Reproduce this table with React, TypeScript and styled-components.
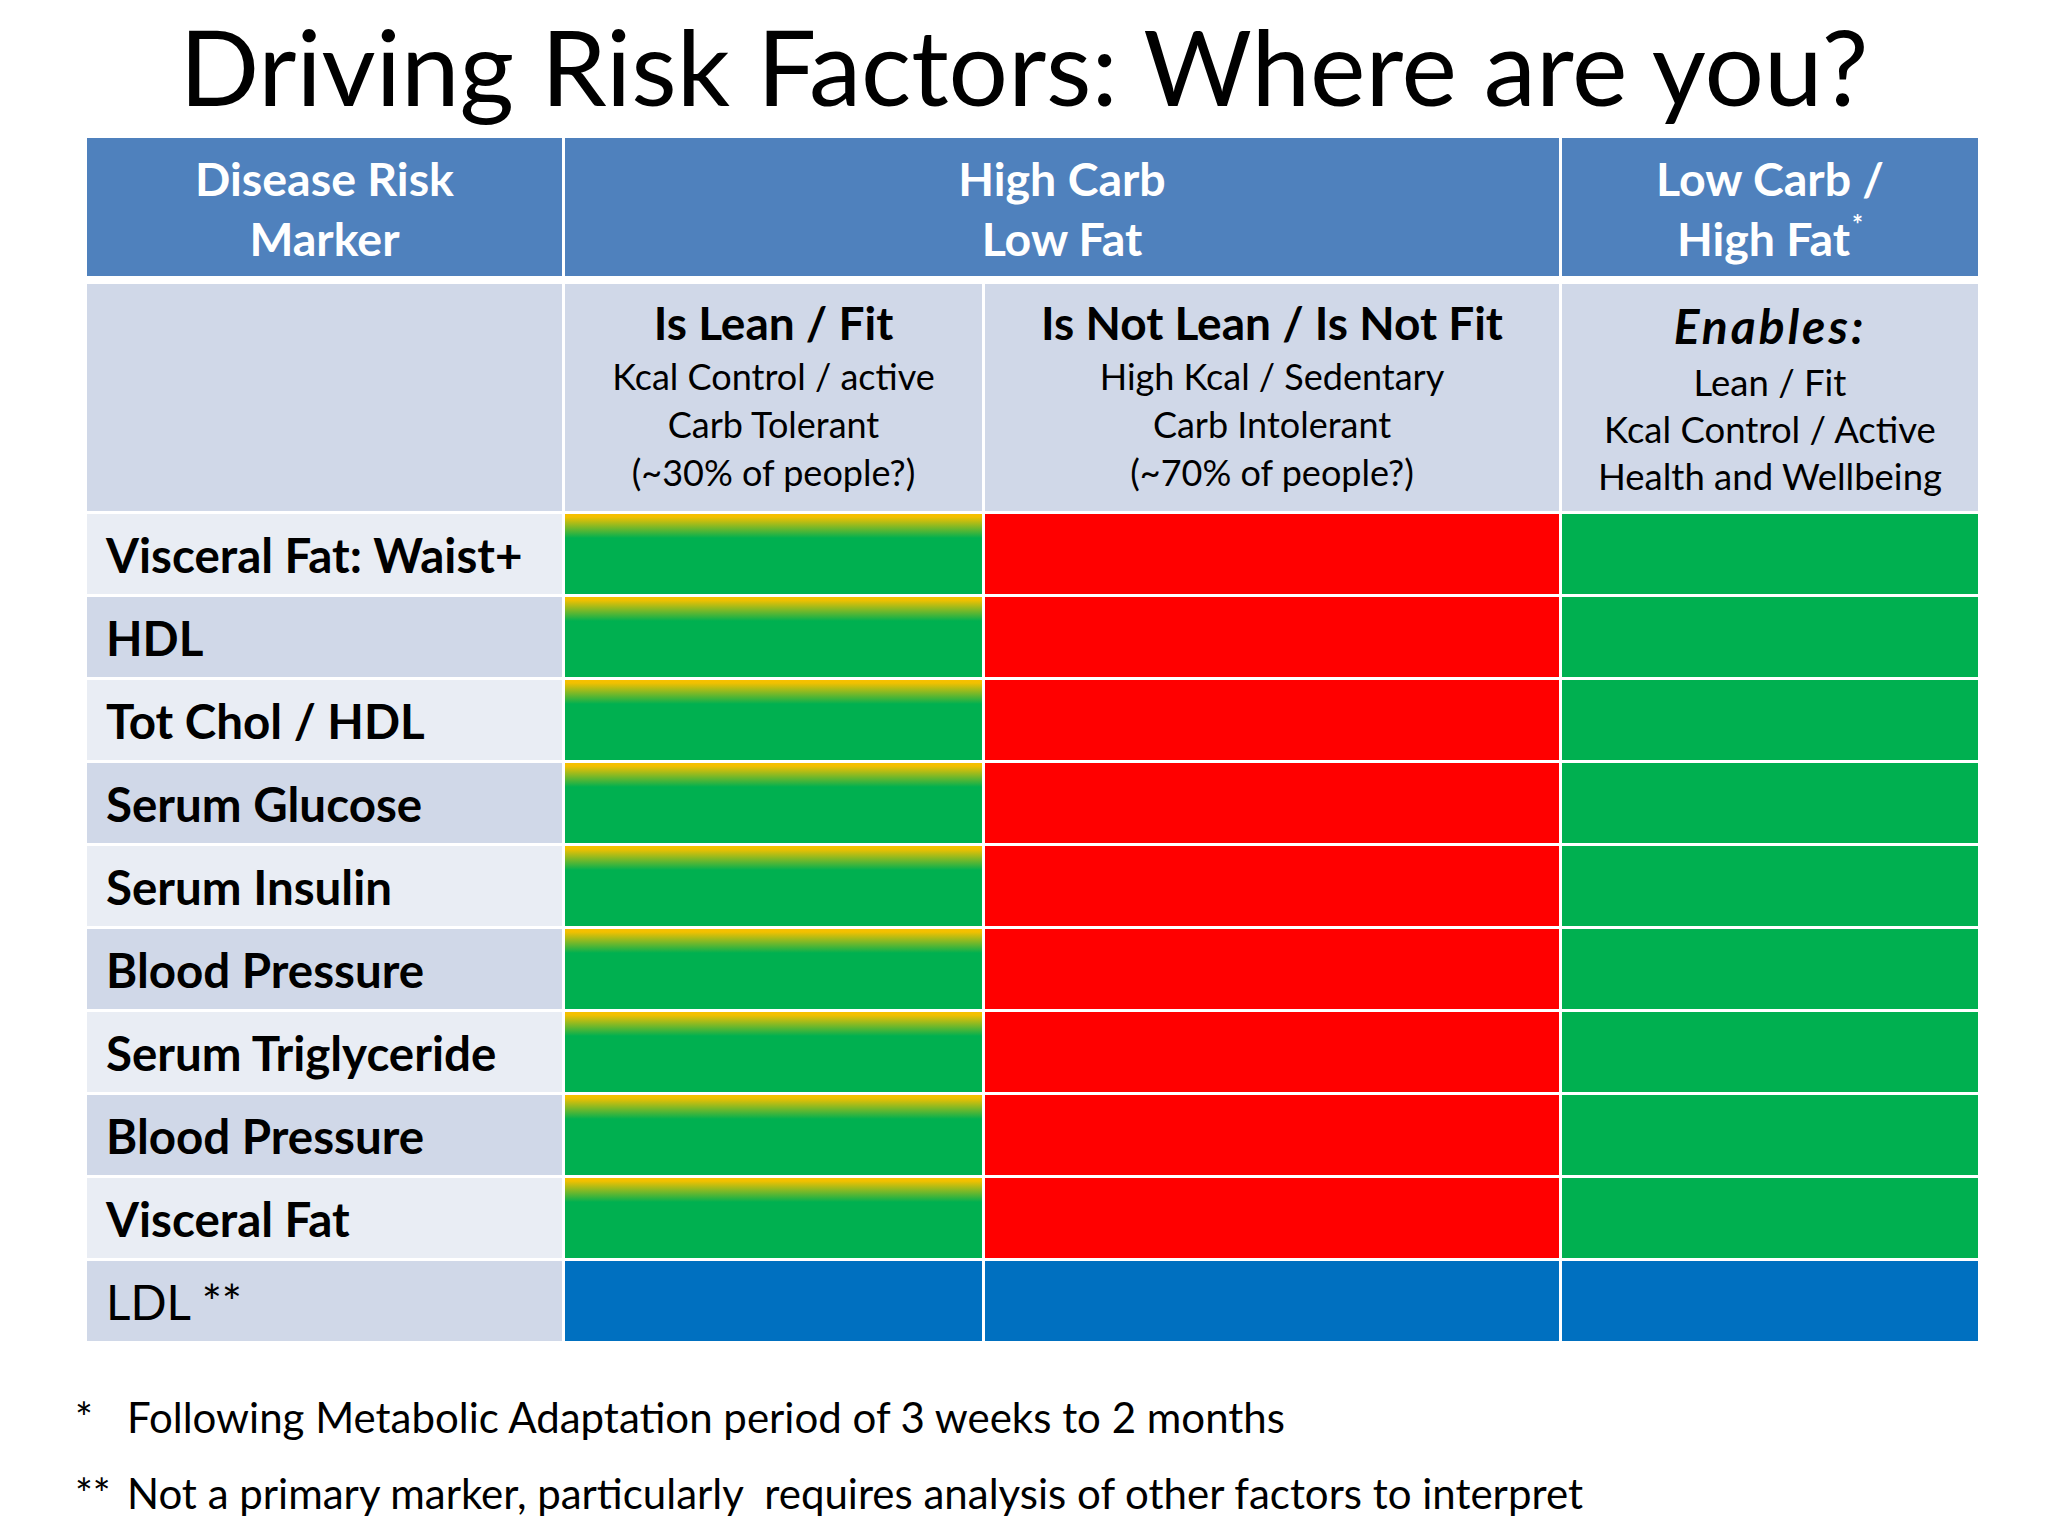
import { Fragment } from "react";
import styled, { createGlobalStyle } from "styled-components";

const GlobalStyle = createGlobalStyle`
  html, body {
    margin: 0;
    padding: 0;
    background: #fff;
  }
  body {
    font-family: Lato, "Open Sans", "Liberation Sans", sans-serif;
    color: #000;
  }
`;

const Slide = styled.div`
  width: 2048px;
  height: 1536px;
  display: flex;
  flex-direction: column;
  overflow: hidden;
`;

const Title = styled.h1`
  margin: 0;
  height: 138px;
  line-height: 130px;
  font-size: 105px;
  font-weight: 400;
  text-align: center;
`;

const Grid = styled.div`
  margin-left: 87px;
  display: grid;
  grid-template-columns: 475px 417px 574px 416px;
  grid-template-rows: 143px 227px repeat(10, 80px);
  column-gap: 3px;
  row-gap: 3px;
`;

const HeadCell = styled.div<{ $span?: number }>`
  grid-column: span ${(p) => p.$span ?? 1};
  background: #4f81bd;
  border-bottom: 5px solid #fff;
  color: #fff;
  font-weight: 700;
  font-size: 46.5px;
  line-height: 60px;
  display: flex;
  align-items: center;
  justify-content: center;
  text-align: center;
`;

const HeadText = styled.div`
  padding-top: 2px;
`;

const Star = styled.span`
  font-size: 26px;
  line-height: 0;
  vertical-align: 22px;
  margin-left: 2px;
`;

const SubCell = styled.div`
  background: #d0d8e8;
  text-align: center;
  padding-top: 10px;
`;

const SubTitle = styled.div`
  font-weight: 700;
  font-size: 46px;
  line-height: 58px;
`;

const SubLine = styled.div`
  font-size: 36px;
  line-height: 48px;
`;

const EnableCell = styled(SubCell)`
  padding-top: 8px;
`;

const Enables = styled.div`
  font-weight: 700;
  font-style: italic;
  font-size: 48px;
  letter-spacing: 3px;
  line-height: 67px;
`;

const EnableLine = styled.div`
  font-size: 36.5px;
  line-height: 47px;
`;

const Label = styled.div<{ $shade: boolean; $bold: boolean }>`
  background: ${(p) => (p.$shade ? "#d0d8e8" : "#e9edf4")};
  display: flex;
  align-items: center;
  padding-left: 19px;
  font-size: 47.5px;
  font-weight: ${(p) => (p.$bold ? 700 : 400)};
`;

type Tone = "lean" | "red" | "green" | "blue";

const tones: Record<Tone, string> = {
  lean: "linear-gradient(180deg, #f7c000 0px, #f2c000 3px, #00b050 24px, #00b050 100%)",
  red: "#ff0000",
  green: "#00b050",
  blue: "#0070c0",
};

const Swatch = styled.div<{ $tone: Tone }>`
  background: ${(p) => tones[p.$tone]};
`;

const Notes = styled.div`
  margin-top: 38px;
  padding-left: 75px;
  font-size: 42px;
  line-height: 76px;
`;

const Note = styled.div`
  display: flex;
  white-space: pre;
`;

const Mark = styled.span`
  width: 52px;
  flex-shrink: 0;
`;

const markers = [
  "Visceral Fat: Waist+",
  "HDL",
  "Tot Chol / HDL",
  "Serum Glucose",
  "Serum Insulin",
  "Blood Pressure",
  "Serum Triglyceride",
  "Blood Pressure",
  "Visceral Fat",
];

export default function App() {
  return (
    <Slide>
      <GlobalStyle />
      <Title>Driving Risk Factors: Where are you?</Title>
      <Grid>
        <HeadCell>
          <HeadText>
            Disease Risk
            <br />
            Marker
          </HeadText>
        </HeadCell>
        <HeadCell $span={2}>
          <HeadText>
            High Carb
            <br />
            Low Fat
          </HeadText>
        </HeadCell>
        <HeadCell>
          <HeadText>
            Low Carb /
            <br />
            High Fat<Star>*</Star>
          </HeadText>
        </HeadCell>

        <SubCell />
        <SubCell>
          <SubTitle>Is Lean / Fit</SubTitle>
          <SubLine>Kcal Control / active</SubLine>
          <SubLine>Carb Tolerant</SubLine>
          <SubLine>(~30% of people?)</SubLine>
        </SubCell>
        <SubCell>
          <SubTitle>Is Not Lean / Is Not Fit</SubTitle>
          <SubLine>High Kcal / Sedentary</SubLine>
          <SubLine>Carb Intolerant</SubLine>
          <SubLine>(~70% of people?)</SubLine>
        </SubCell>
        <EnableCell>
          <Enables>Enables:</Enables>
          <EnableLine>Lean / Fit</EnableLine>
          <EnableLine>Kcal Control / Active</EnableLine>
          <EnableLine>Health and Wellbeing</EnableLine>
        </EnableCell>

        {markers.map((m, i) => (
          <Fragment key={i}>
            <Label $shade={i % 2 === 1} $bold>
              {m}
            </Label>
            <Swatch $tone="lean" />
            <Swatch $tone="red" />
            <Swatch $tone="green" />
          </Fragment>
        ))}

        <Label $shade $bold={false}>
          LDL **
        </Label>
        <Swatch $tone="blue" />
        <Swatch $tone="blue" />
        <Swatch $tone="blue" />
      </Grid>
      <Notes>
        <Note>
          <Mark>*</Mark>
          <span>Following Metabolic Adaptation period of 3 weeks to 2 months</span>
        </Note>
        <Note>
          <Mark>**</Mark>
          <span>Not a primary marker, particularly  requires analysis of other factors to interpret</span>
        </Note>
      </Notes>
    </Slide>
  );
}
